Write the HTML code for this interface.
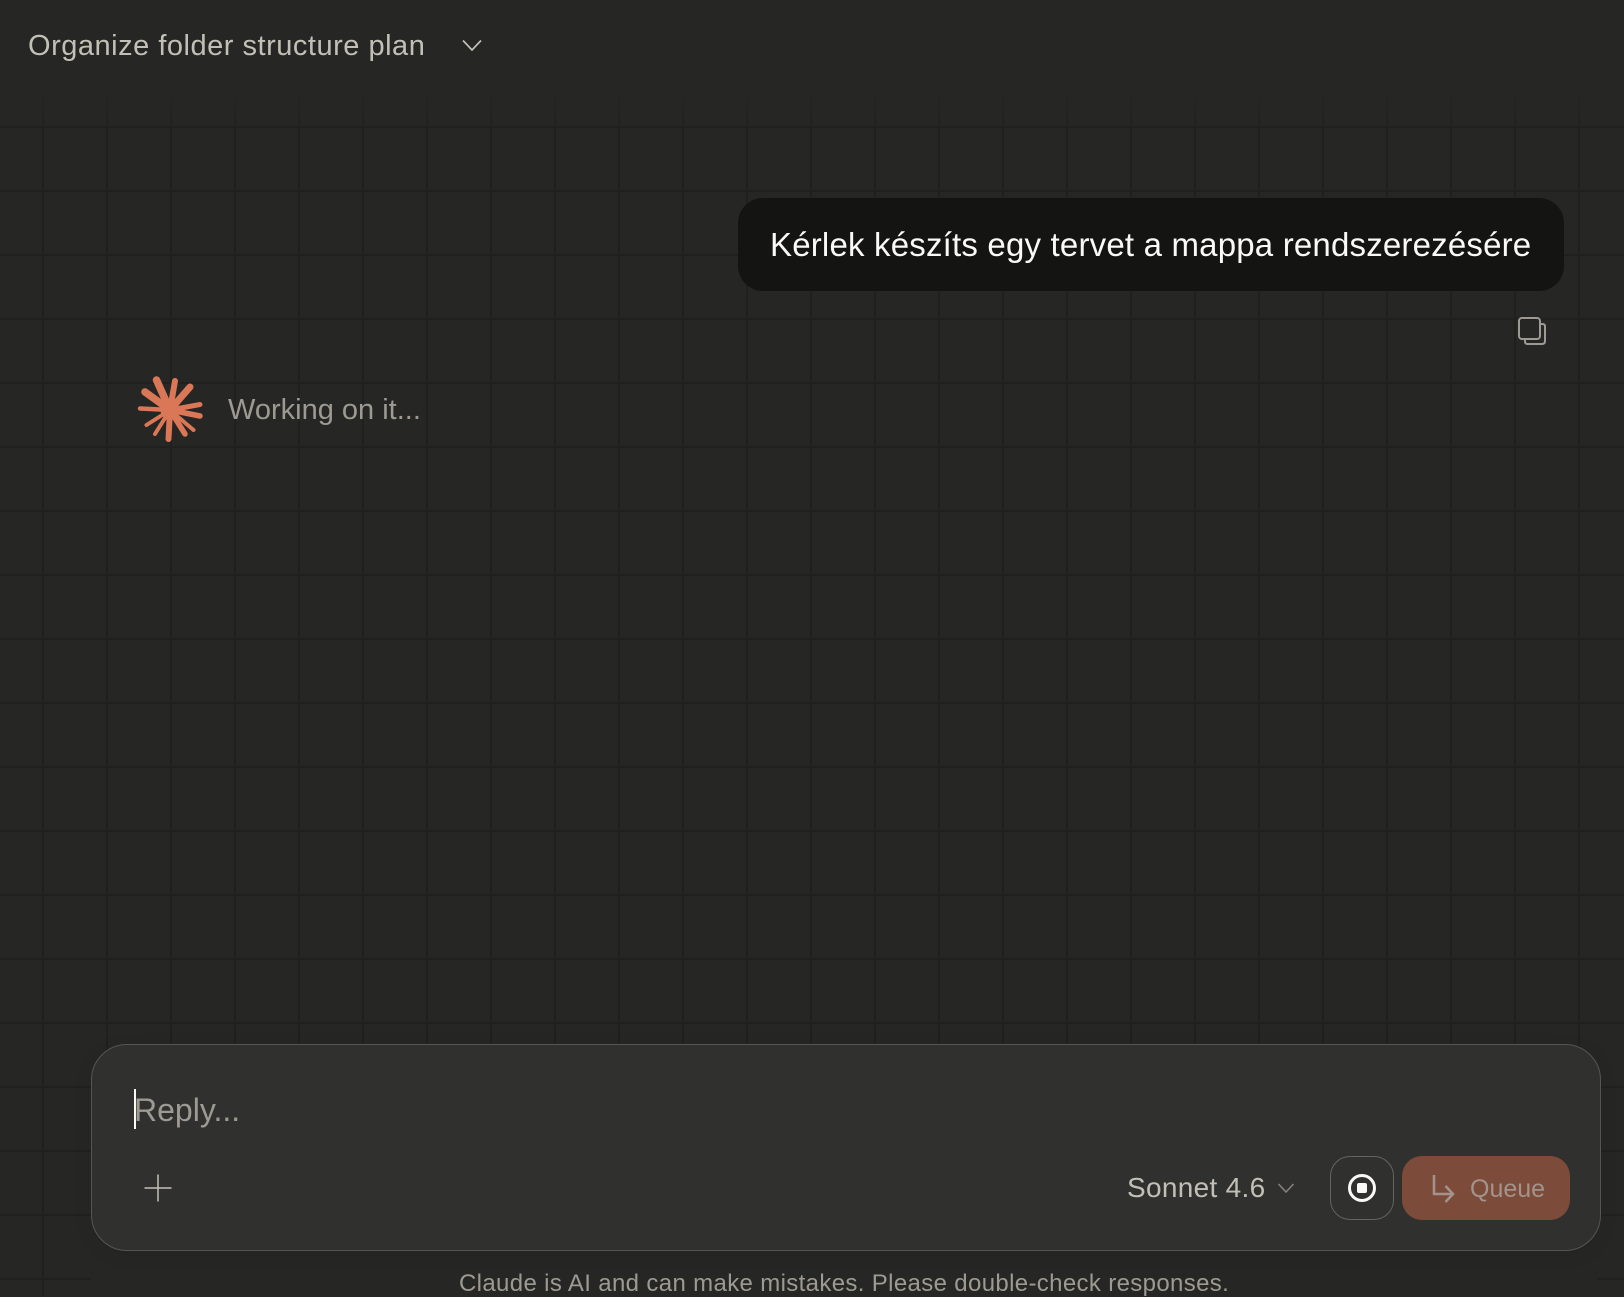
<!DOCTYPE html>
<html lang="hu">
<head>
<meta charset="utf-8">
<title>Organize folder structure plan</title>
<style>
html,body{margin:0;padding:0;background:#262624;}
body{position:relative;width:1624px;height:1296px;overflow:hidden;font-family:"Liberation Sans",sans-serif;}
.abs{position:absolute;}
.t{position:absolute;white-space:nowrap;line-height:1;}
.grid{position:absolute;left:0;top:0;width:1624px;height:1296px;
background-image:linear-gradient(to right,#20201e 0,#20201e 2px,transparent 2px),linear-gradient(to bottom,#20201e 0,#20201e 2px,transparent 2px);
background-size:64px 64px;background-position:42px 62px;}
.fade{position:absolute;left:0;top:0;width:1624px;height:130px;background:linear-gradient(to bottom,#262624 0,#262624 92px,rgba(38,38,36,.5) 112px,rgba(38,38,36,0) 128px);}
.foot{position:absolute;left:91px;top:1240px;width:1506px;height:56px;background:#262624;}
.input{position:absolute;left:91px;top:1044px;width:1510px;height:207px;box-sizing:border-box;background:#30302e;border:1.5px solid #555552;border-radius:36px;box-shadow:0 4px 20px rgba(0,0,0,.06);}
.bubble{position:absolute;left:738px;top:198px;width:826px;height:93px;background:#141413;border-radius:25px;}
.stop{position:absolute;left:1330px;top:1156px;width:64px;height:64px;box-sizing:border-box;border:1px solid #63635f;border-radius:20px;}
.queue{position:absolute;left:1402px;top:1156px;width:168px;height:64px;background:#7c4b39;border-radius:20px;}
</style>
</head>
<body>
<div class="grid"></div>
<div class="fade"></div>
<div class="foot"></div>

<div class="t" style="left:28px;top:32px;font-size:29px;color:#c2c0b6;letter-spacing:.51px;">Organize folder structure plan</div>
<svg class="abs" style="left:460px;top:36px" width="24" height="20" viewBox="0 0 24 20"><path d="M3 4.500L12 14L21 4.500" fill="none" stroke="#c2c0b6" stroke-width="1.700"/></svg>

<div class="bubble"></div>
<div class="t" style="left:770px;top:228px;font-size:33px;color:#faf9f5;letter-spacing:.19px;">Kérlek készíts egy tervet a mappa rendszerezésére</div>

<svg class="abs" style="left:1514px;top:313px" width="36" height="36" viewBox="0 0 36 36" fill="none" stroke="#9c9a92" stroke-width="2">
<rect x="5" y="5" width="21" height="21" rx="3"/>
<path d="M26.500 11H28.500Q31 11 31 13.500V28Q31 31 28 31H13.500Q11 31 11 28.500V26"/>
</svg>

<svg class="abs" style="left:130px;top:368px" width="80" height="80" viewBox="130 368 80 80" fill="none" stroke="#d97757" stroke-linecap="round">
<circle cx="170" cy="410" r="9.500" fill="#d97757" stroke="none"/>
<path stroke-width="7.500" d="M170 410L156.500 380"/>
<path stroke-width="6" d="M170 410L175 381"/>
<path stroke-width="7" d="M170 410L190 387"/>
<path stroke-width="5" d="M170 410L200 404.500"/>
<path stroke-width="5.500" d="M170 410L200 416"/>
<path stroke-width="4" d="M170 410L193.500 430"/>
<path stroke-width="5.500" d="M170 410L185 434"/>
<path stroke-width="6" d="M170 410L168.500 439"/>
<path stroke-width="4" d="M170 410L155 434"/>
<path stroke-width="4" d="M170 410L146.500 425"/>
<path stroke-width="4.500" d="M170 410L140 408.500"/>
<path stroke-width="7.500" d="M170 410L145 392"/>
</svg>

<div class="t" style="left:228px;top:396px;font-size:29px;color:#9c9a92;">Working on it...</div>

<div class="input"></div>
<div class="abs" style="left:134px;top:1089px;width:2px;height:40px;background:#faf9f5;"></div>
<div class="t" style="left:134px;top:1094px;font-size:32px;color:#9c9a92;">Reply...</div>

<svg class="abs" style="left:142px;top:1172px" width="32" height="32" viewBox="0 0 32 32"><path d="M16 2.500V29.500M2.500 16H29.500" stroke="#c2c0b6" stroke-width="1.500" fill="none"/></svg>

<div class="t" style="left:1127px;top:1174px;font-size:28px;color:#c2c0b6;letter-spacing:.3px;">Sonnet 4.6</div>
<svg class="abs" style="left:1276px;top:1180px" width="20" height="16" viewBox="0 0 20 16"><path d="M2.500 4L10 12L17.500 4" fill="none" stroke="#85837c" stroke-width="1.500"/></svg>

<div class="stop"></div>
<svg class="abs" style="left:1346px;top:1172px" width="32" height="32" viewBox="0 0 32 32"><circle cx="16" cy="16" r="12.500" fill="none" stroke="#faf9f5" stroke-width="3"/><rect x="11" y="11" width="10" height="10" rx="2" fill="#faf9f5"/></svg>

<div class="queue"></div>
<svg class="abs" style="left:1428px;top:1170px" width="30" height="36" viewBox="0 0 30 36" fill="none" stroke="#a2948c" stroke-width="2.500"><path d="M6 5V24H25"/><path d="M17.500 16L25 24L17.500 32"/></svg>
<div class="t" style="left:1470px;top:1177px;font-size:25px;color:#a2948c;">Queue</div>

<div class="t" style="left:459px;top:1272px;font-size:24px;color:#9c9a92;letter-spacing:.35px;">Claude is AI and can make mistakes. Please double-check responses.</div>
</body>
</html>
